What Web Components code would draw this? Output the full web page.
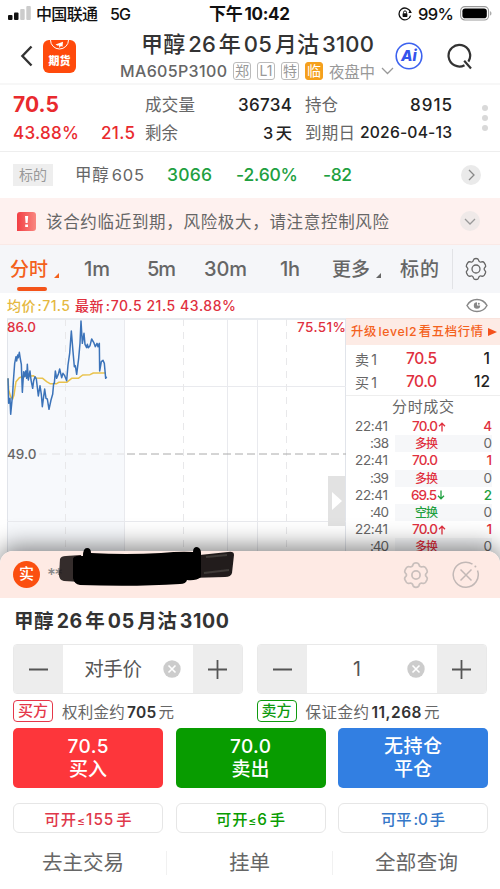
<!DOCTYPE html>
<html lang="zh-CN">
<head>
<meta charset="utf-8">
<meta name="viewport" content="width=device-width">
<title>甲醇26年05月沽3100</title>
<style>
    html, body {
        margin: 0;
        width: 500px;
        height: 889px;
        overflow: hidden;
        background: #fff;
    }
    body {
        font-family: Inter, "Noto Sans CJK SC", sans-serif;
        color: #333;
        text-autospace: normal;
    }
</style>
</head>
<body>
<option-page></option-page>

<script>
const gear = 'M12 1.5 C13.4 1.5 14.3 2 14.6 3.2 C14.9 4.7 16 5.4 17.5 4.9 C18.7 4.5 19.6 4.8 20.3 5.9 L21.4 7.8 C22 8.9 21.8 9.8 20.9 10.6 C19.9 11.5 19.9 12.5 20.9 13.4 C21.8 14.2 22 15.1 21.4 16.2 L20.3 18.1 C19.6 19.2 18.7 19.5 17.5 19.1 C16 18.6 14.9 19.3 14.6 20.8 C14.3 22 13.4 22.5 12 22.5 C10.6 22.5 9.7 22 9.4 20.8 C9.1 19.3 8 18.6 6.5 19.1 C5.3 19.5 4.4 19.2 3.7 18.1 L2.6 16.2 C2 15.1 2.2 14.2 3.1 13.4 C4.1 12.5 4.1 11.5 3.1 10.6 C2.2 9.8 2 8.9 2.6 7.8 L3.7 5.9 C4.4 4.8 5.3 4.5 6.5 4.9 C8 5.4 9.1 4.7 9.4 3.2 C9.7 2 10.6 1.5 12 1.5 Z'

function define(name, html) {
    customElements.define(name, class extends HTMLElement {
        constructor() {
            super();
            this.attachShadow({mode: 'open'})
            this.shadowRoot.innerHTML = html
        }
    })
}

define('status-bar', `
<style>
    :host { display: flex; align-items: center; height: 28px; color: #111; font-size: 16px; line-height: 28px; }
    .signal { margin: 0 5px 2px 8px; }
    .net { margin-left: 12px; font-size: 16px; font-weight: 500; }
    .carrier { font-weight: 500; }
    .time { margin-left: 78px; font-weight: 700; font-size: 17px; }
    .lock { margin-left: 108px; }
    .pct { margin-left: 6px; font-weight: 500; font-size: 16.5px; }
    .battery { margin: 0 0 2px 6px; }
</style>
<svg class="signal" width="23" height="14"><g fill="#111"><rect y="9" width="4.5" height="5" rx="1"/><rect x="6" y="6.5" width="4.5" height="7.5" rx="1"/></g><g fill="#ccc"><rect x="12.2" y="3" width="4.5" height="11" rx="1"/><rect x="18.3" width="4.5" height="14" rx="1"/></g></svg>
<fit-text class="carrier" w="62">中国联通</fit-text>
<fit-text class="net" w="21">5G</fit-text>
<fit-text class="time" w="81">下午10:42</fit-text>
<svg class="lock" width="14" height="14" viewBox="0 0 14 14" fill="none" stroke="#111" stroke-width="1.3"><path d="M12.5 5 A5.9 5.9 0 1 0 12.6 8.6"/><path d="M10.3 6 L13.8 6 L12.4 3.2Z" fill="#111" stroke="none"/><rect x="4.6" y="6.3" width="4.8" height="3.6" rx=".6" fill="#111" stroke="none"/><path d="M5.5 6.5V5.4a1.5 1.5 0 0 1 3 0v1.1" stroke-width="1"/></svg>
<fit-text class="pct" w="36">99%</fit-text>
<svg class="battery" width="34" height="15"><rect x=".6" y=".6" width="28" height="13.4" rx="4.3" fill="none" stroke="#999" stroke-width="1.1"/><rect x="2.4" y="2.4" width="24.4" height="9.8" rx="2.8" fill="#000"/><path d="M30.2 5.2c1.6.4 1.6 4 0 4.4z" fill="#999"/></svg>
`)

define('title-bar', `
<style>
    :host { display: flex; height: 57px; border-bottom: 2px solid #f7f7f7; box-sizing: border-box; }
    .back { margin: 17px 0 0 20px; }
    .app { margin: 12px 0 0 10px; }
    .mid { width: 276px; margin-left: 44px; }
    .name { display: block; width: 233px; margin-left: 21px; font-size: 22px; font-weight: 500; line-height: 32px; }
    .sub { display: flex; align-items: center; height: 22px; color: #666; font-size: 16px; font-weight: 500; }
    .tag { box-sizing: border-box; width: 18px; height: 18px; margin-left: 6px; border: 1px solid #bbb; border-radius: 3px; color: #999; font-size: 14px; font-weight: 400; line-height: 15px; text-align: center; }
    .hot { background: #f5a01d; border-color: #f5a01d; color: #fff; }
    .night { margin-left: 6px; color: #999; font-weight: 400; font-size: 15.5px; }
    .down { margin-left: 6px; }
    .ai { margin: 14px 0 0 -1px; }
    .search { margin: 15px 0 0 23px; }
</style>
<svg class="back" width="13" height="22" fill="none" stroke="#333" stroke-width="2.4"><path d="M11.5 1.5 L2.4 11 L11.5 20.5"/></svg>
<svg class="app" width="33" height="33" viewBox="0 0 33 33"><rect width="33" height="33" rx="6" fill="#ff4a0c"/><g fill="none" stroke="#fff" stroke-width="1"><path d="M7.5 0a9 9 0 0 0 18 0"/></g><path d="M12.5 4.4l7.5-2.7-.5 5-1.6-.8-1.6 2-.3-2.6-1.1.5z" fill="#fff"/><text x="16.5" y="25" text-anchor="middle" font-size="11" font-weight="900" fill="#fff">期货</text></svg>
<div class="mid">
    <fit-text class="name" w="233">甲醇26年05月沽3100</fit-text>
    <div class="sub">
        <fit-text class="code" w="107">MA605P3100</fit-text>
        <span class="tag">郑</span><span class="tag">L1</span><span class="tag">特</span><span class="tag hot">临</span>
        <fit-text class="night" w="46">夜盘中</fit-text>
        <svg class="down" width="13" height="8" fill="none" stroke="#999" stroke-width="1.3"><path d="M1 1l5.5 5.5L12 1"/></svg>
    </div>
</div>
<svg class="ai" width="28" height="28"><circle cx="14" cy="14" r="12.8" fill="none" stroke="#3c62ef" stroke-width="1.6"/><text x="13.8" y="19.3" text-anchor="middle" font-size="15" font-weight="800" font-style="italic" fill="#3453ec">Ai</text></svg>
<svg class="search" width="28" height="28" fill="none" stroke="#333" stroke-width="2.2"><path d="M18.5 22.2 A10.8 10.8 0 1 1 22.4 18.6"/><path d="M18.2 17.8 L25 25.4"/></svg>
`)

define('quote-head', `
<style>
    :host { display: flex; height: 67px; border-bottom: 1px solid #eee; box-sizing: border-box; color: #222; font-size: 17px; font-weight: 500; }
    .col { display: grid; grid-template-rows: 28px 28px; padding-top: 6px; line-height: 28px; }
    .price { color: #e92a2e; width: 122px; margin-left: 13px; }
    .big { font-size: 21px; font-weight: 700; }
    .pair { display: flex; justify-content: space-between; align-items: center; }
    .vol { width: 147px; margin-left: 10px; }
    .hold { width: 147px; margin-left: 13px; }
    .k { color: #666; font-weight: 400; font-size: 16.5px; }
    .days { font-size: 16.3px; }
    .date { font-size: 15.7px; }
    svg { margin: 20px 0 0 30px; }
</style>
<div class="col price">
    <fit-text class="big" w="46">70.5</fit-text>
    <div class="pair"><fit-text w="66">43.88%</fit-text><fit-text w="34">21.5</fit-text></div>
</div>
<div class="col vol">
    <div class="pair"><fit-text class="k" w="50">成交量</fit-text><fit-text w="54">36734</fit-text></div>
    <div class="pair"><fit-text class="k" w="33">剩余</fit-text><fit-text class="days" w="29">3天</fit-text></div>
</div>
<div class="col hold">
    <div class="pair"><fit-text class="k" w="33">持仓</fit-text><fit-text w="42">8915</fit-text></div>
    <div class="pair"><fit-text class="k" w="50">到期日</fit-text><fit-text class="date" w="92">2026-04-13</fit-text></div>
</div>
<svg width="6" height="26" fill="#d9d9d9"><circle cx="3" cy="3" r="3"/><circle cx="3" cy="13" r="3"/><circle cx="3" cy="23" r="3"/></svg>
`)

define('underlying-row', `
<style>
    :host { display: flex; align-items: center; height: 46px; font-size: 17.5px; font-weight: 500; line-height: 24px; color: #1ea03f; }
    .tag { width: 40px; height: 22px; margin-left: 13px; background: #eee; color: #999; font-size: 14px; font-weight: 400; line-height: 22px; text-align: center; }
    .name { margin-left: 22px; color: #666; font-weight: 400; font-size: 16.5px; }
    .p { margin-left: 23px; }
    .r { margin-left: 24px; }
    .d { margin-left: 25px; }
    svg { margin-left: 109px; }
</style>
<span class="tag">标的</span>
<fit-text class="name" w="69">甲醇605</fit-text>
<fit-text class="p" w="45">3066</fit-text>
<fit-text class="r" w="62">-2.60%</fit-text>
<fit-text class="d" w="29">-82</fit-text>
<svg width="20" height="20"><circle cx="10" cy="10" r="10" fill="#eaeaea"/><path d="M8 5l5 5-5 5" fill="none" stroke="#888" stroke-width="1.3"/></svg>
`)

define('risk-notice', `
<style>
    :host { display: flex; align-items: center; height: 47px; background: #fef1ef; border-bottom: 1px solid #fae9e6; box-sizing: border-box; font-size: 16.5px; line-height: 24px; color: #666; }
    .mark { margin-left: 17px; }
    .msg { margin: 2px 0 0 10px; }
    .fold { margin-left: auto; margin-right: 20px; }
</style>
<svg class="mark" width="19" height="19"><defs><linearGradient id="g" x1="0" x2="1"><stop stop-color="#f23f44"/><stop offset="1" stop-color="#f98780"/></linearGradient></defs><path d="M3 0h13a3 3 0 0 1 3 3v13a3 3 0 0 1-3 3H0V3a3 3 0 0 1 3-3z" fill="url(#g)"/><path d="M8 4h3.2l-.6 7H8.6zM8.2 12.6h2.8v2.4H8.2z" fill="#fff"/></svg>
<fit-text class="msg" w="343">该合约临近到期，风险极大，请注意控制风险</fit-text>
<svg class="fold" width="20" height="20"><circle cx="10" cy="10" r="10" fill="#efe9e8"/><path d="M5 8l5 5 5-5" fill="none" stroke="#999" stroke-width="1.3"/></svg>
`)

define('period-tabs', `
<style>
    :host { display: flex; height: 48px; background: #f5f6f9; font-size: 20px; font-weight: 500; line-height: 49px; color: #666; }
    .cn { font-size: 19px; }
    .on { position: relative; margin-left: 10px; color: #f4611c; }
    .on::after { content: ''; position: absolute; left: 7px; top: 42px; width: 30px; height: 4px; border-radius: 2px; background: #f4541a; }
    .tri { margin: 28px 0 0 6px; }
    .m1 { margin-left: 25px; } .m5 { margin-left: 37px; } .m30 { margin-left: 28px; }
    .h1 { margin-left: 33px; } .more { margin-left: 32px; } .base { margin-left: 19px; }
    .set { display: flex; align-items: center; height: 40px; margin: 4px 0 0 13px; padding-left: 11px; border-left: 1px solid #e2e3e6; }
</style>
<fit-text class="cn on" w="38">分时</fit-text>
<svg class="tri" width="5" height="5"><path d="M5 0v5H0z" fill="#f4611c"/></svg>
<fit-text class="m1" w="26">1m</fit-text>
<fit-text class="m5" w="29">5m</fit-text>
<fit-text class="m30" w="43">30m</fit-text>
<fit-text class="h1" w="20">1h</fit-text>
<fit-text class="cn more" w="38">更多</fit-text>
<svg class="tri" width="5" height="5"><path d="M5 0v5H0z" fill="#666"/></svg>
<fit-text class="cn base" w="39">标的</fit-text>
<div class="set"><svg width="24" height="24" viewBox="0 0 24 24" fill="none" stroke="#666" stroke-width="1.3"><path d="${gear}"/><circle cx="12" cy="12" r="4"/></svg></div>
`)

define('avg-line', `
<style>
    :host { display: flex; align-items: center; height: 25px; font-size: 14px; font-weight: 500; line-height: 20px; color: #e0303e; }
    .avg { margin: 0 5px 0 7px; color: #e5b83f; }
    svg { margin-left: auto; margin-right: 12px; }
</style>
<fit-text class="avg" w="63">均价:71.5</fit-text>
<fit-text w="161">最新:70.5 21.5 43.88%</fit-text>
<svg width="22" height="15" viewBox="0 0 22 15" fill="none" stroke="#888" stroke-width="1.5"><path d="M1 7.5C5.5 -.5 16.5 -.5 21 7.5C16.5 15.5 5.5 15.5 1 7.5Z"/><path d="M11 4.3V7.5H14.2A3.2 3.2 0 1 1 11 4.3Z" fill="#888" stroke="none"/><circle cx="12.8" cy="5.7" r="1" fill="#888" stroke="none"/></svg>
`)

define('time-chart', `
<style>
    :host { display: block; width: 346px; height: 248px; }
    svg { display: block; }
    text { font-weight: 500; font-size: 13.5px; }
</style>
<svg width="346" height="248">
    <rect x="7" y="1" width="118" height="247" fill="#f7f9fc"/>
    <g stroke="#e1e4ea" fill="none">
        <path d="M7 1H346" stroke-width="1.5"/><path d="M7.5 1V248M345.5 1V248"/>
        <path d="M124.5 1V248M227.5 1V248M257.5 1V248M7 68.5H346M7 203.5H346" stroke="#e9eaee"/>
        <path d="M65.5 1V248M183.5 1V248M286.5 1V248" stroke="#e8e8ea" stroke-dasharray="7 6"/>
        <path d="M39 136H124" stroke="#e0e0e2" stroke-dasharray="8 5"/>
        <path d="M127 136H346" stroke="#aaa" stroke-dasharray="8 4"/>
    </g>
    <g transform="translate(0 -3) scale(.33333)" fill="none" stroke-linejoin="round">
        <polyline stroke="#e9c24c" stroke-width="4.5" points="24,190 26,225 32,245 38,252 42,240 48,200 58,188 70,184 85,184 100,182 108,189 128,190 140,200 150,206 170,206 176,202 200,202 215,190 235,190 248,180 270,179 280,174 318,174"/>
        <polyline stroke="#3b73b9" stroke-width="4.5" points="24,190 26,265 30,250 32,298 38,235 40,200 44,145 48,125 50,138 53,120 55,128 58,112 61,132 64,148 67,232 71,170 74,185 77,168 80,190 82,148 85,195 90,168 93,195 98,220 101,197 105,185 109,192 115,243 120,212 124,238 127,275 134,222 138,250 142,252 147,283 153,255 158,238 161,205 163,205 166,168 170,190 175,178 179,162 185,188 189,175 194,182 200,197 204,150 209,115 214,48 219,110 223,155 226,152 230,178 236,130 240,85 243,18 247,85 252,55 255,88 260,98 262,88 265,98 270,92 275,72 281,82 286,95 291,85 294,95 298,85 299,168 304,140 309,136 313,145 317,190 320,185"/>
    </g>
    <text x="7" y="14" textLength="29" fill="#e0303e">86.0</text>
    <text x="297" y="14" textLength="49" fill="#e0303e">75.51%</text>
    <text x="7" y="140.5" textLength="29.5" fill="#666">49.0</text>
    <rect x="328" y="158" width="17" height="50" fill="#e2e2e2"/><path d="M332 174l10 9-10 9z" fill="#fff"/>
</svg>
`)

// one deal: time, price with arrow, volume, and the kind of deal under it
class TickRow extends HTMLElement {
    constructor() {
        super();
        this.attachShadow({mode: 'open'})
    }
    connectedCallback() {
        const [time, sec, price, arrow, vol, kind] = this.getAttribute('data').split(' ')
        const color = arrow !== 'down' ? '#e0303e' : '#1ea03f'
        const path = arrow !== 'down' ? 'M4 9.5V1.2M1 4.2L4 1.2L7 4.2' : 'M4 .5V8.8M1 5.8L4 8.8L7 5.8'
        this.shadowRoot.innerHTML = `
        <style>
            :host { display: grid; grid-template-columns: 34px 14px 64px 1fr; grid-template-rows: 17.3px 17px; margin: 0 0 0 9px; width: 137px; font-size: 13.5px; line-height: 17px; color: #666; }
            .time { grid-column: 1 / 3; }
            .sec { grid-column: 1 / 2; justify-self: end; }
            .price { display: flex; align-items: center; margin-left: ${arrow === 'down' ? 8 : 9}px; color: #e0303e; font-weight: 500; }
            .vol { color: ${color}; font-weight: 500; text-align: right; }
            .cell { grid-column: 3 / 5; display: flex; justify-content: space-between; background: #f6f7f9; margin-left: -8px; }
            .kind { margin-left: 20px; color: ${color}; font-weight: 500; font-size: 12px; }
        </style>
        <fit-text class="time" w="33">${time}</fit-text>
        <span class="price"><fit-text w="26">${price}</fit-text>${arrow === 'none' ? '' : `<svg width="8" height="10" viewBox="0 0 8 10" fill="none" stroke="${color}" stroke-width="1.3"><path d="${path}"/></svg>`}</span>
        <span class="vol">${vol}</span>
        <fit-text class="sec" w="19">${sec}</fit-text>
        <span class="cell"><fit-text class="kind" w="23">${kind}</fit-text><span>0</span></span>`
    }
}
customElements.define('tick-row', TickRow)

define('order-book', `
<style>
    :host { display: block; width: 154px; height: 248px; overflow: hidden; }
    .ad { display: flex; align-items: center; height: 27px; padding-left: 5px; background: #fdebe5; border-top: 1px solid #f9e3dd; box-sizing: border-box; color: #f4611c; font-size: 12.3px; font-weight: 500; line-height: 20px; }
    .ad svg { margin-left: 4px; }
    .lv { display: flex; align-items: center; height: 23px; padding: 0 10px 0 9px; font-size: 15.5px; font-weight: 500; color: #222; }
    .ad + .lv { padding-top: 2px; }
    .s { color: #666; font-weight: 400; font-size: 14px; }
    .c { margin: 0 auto 0 29px; color: #e0303e; }
    .head { height: 22px; margin-top: 2px; border-top: 1px solid #eee; box-sizing: border-box; line-height: 21px; font-size: 15px; text-align: center; color: #666; }
    .list { padding-top: 1px; }
</style>
<div class="ad"><fit-text w="132">升级level2看五档行情</fit-text><svg width="10" height="10"><path d="M1 1l9 4-9 4z" fill="#f4511c"/></svg></div>
<div class="lv"><fit-text class="s" w="22">卖1</fit-text><fit-text class="c" w="31">70.5</fit-text><span>1</span></div>
<div class="lv"><fit-text class="s" w="22">买1</fit-text><fit-text class="c" w="31">70.0</fit-text><fit-text w="16">12</fit-text></div>
<div class="head"><fit-text w="62">分时成交</fit-text></div>
<div class="list">
    <tick-row data="22:41 :38 70.0 up 4 多换"></tick-row>
    <tick-row data="22:41 :39 70.0 none 1 多换"></tick-row>
    <tick-row data="22:41 :40 69.5 down 2 空换"></tick-row>
    <tick-row data="22:41 :40 70.0 up 1 多换"></tick-row>
</div>
`)

define('sheet-head', `
<style>
    :host { position: relative; display: flex; align-items: center; height: 47px; border-radius: 13px 13px 0 0; background: #feeae4; color: #888; }
    .real { width: 27px; height: 27px; margin-left: 13px; border-radius: 50%; background: #fb4f10; color: #fff; font-size: 15px; font-weight: 500; line-height: 26px; text-align: center; }
    .acct { margin-left: 7px; font-size: 17px; font-weight: 500; }
    .blot { position: absolute; left: 56px; top: -4px; }
    .gear { margin-left: auto; }
    .close { margin: 0 20px 0 22px; }
</style>
<span class="real">实</span>
<fit-text class="acct" w="16">**</fit-text>
<svg class="gear" width="28" height="28" viewBox="0 0 24 24" fill="none" stroke="#c9bfbc" stroke-width="1.5"><path d="${gear}"/><circle cx="12" cy="12" r="3.5"/></svg>
<svg class="close" width="28" height="28" fill="none" stroke="#c2b8b6" stroke-width="1.5"><path d="M20.5 3.2A12.5 12.5 0 1 0 25.5 9.5"/><circle cx="23.4" cy="5.5" r="1" fill="#c2b8b6" stroke="none"/><path d="M8.5 8.5l11 11M19.5 8.5l-11 11"/></svg>
<svg class="blot" width="184" height="44">
    <defs><filter id="b"><feGaussianBlur stdDeviation=".7"/></filter></defs>
    <g filter="url(#b)">
        <path d="M4 12Q5 9 10 9L25 8V35L8 34Q3 33 3 28z" fill="#1c1614" opacity=".9"/>
        <path d="M134 9L172 5Q178 4 178 8L176 26Q175 30 169 30L134 31z" fill="#231f1e"/>
        <path d="M150 10L171 8M148 26L173 23" stroke="#3f3a38" stroke-width="2"/>
        <path d="M17 12Q18 8 27 9Q27 1 31 1Q35 1 35 6Q70 8 105 6Q125 4 137 5Q137 0 141 0Q145 1 145 6L145 30Q140 34 131 33Q130 37 124 37Q78 40 24 38Q18 37 17 31z" fill="#000"/>
    </g>
</svg>
`)

define('num-stepper', `
<style>
    :host { display: flex; width: 230px; height: 50px; box-sizing: border-box; border: 1px solid #e9e9e9; border-radius: 4px; overflow: hidden; }
    .btn { display: grid; place-items: center; width: 49px; background: #ededed; }
    .val { display: grid; grid-template-columns: 1fr 30px; align-items: center; flex: 1; font-size: 19.5px; line-height: 30px; text-align: center; color: #555; }
    .val span { justify-self: center; white-space: nowrap; }
</style>
<div class="btn"><svg width="19" height="19" stroke="#555" stroke-width="1.8"><path d="M0 9.5h19"/></svg></div>
<div class="val"><span><slot></slot></span><svg width="18" height="18"><circle cx="9" cy="9" r="8.7" fill="#ccc"/><path d="M5.5 5.5l7 7M12.5 5.5l-7 7" stroke="#fff" stroke-width="1.6"/></svg></div>
<div class="btn"><svg width="19" height="19" stroke="#555" stroke-width="1.8"><path d="M0 9.5h19M9.5 0v19"/></svg></div>
`)

define('trade-button', `
<style>
    :host { display: flex; flex-direction: column; }
    .main { display: flex; flex-direction: column; justify-content: center; align-items: center; height: 60px; border-radius: 5px; background: var(--tone); color: #fff; font-size: 19px; font-weight: 500; line-height: 23.5px; }
    .can { display: flex; align-items: center; justify-content: center; height: 30px; margin-top: 15px; box-sizing: border-box; border: 1px solid #e6e6e6; border-radius: 6px; color: var(--ink, var(--tone)); font-size: 15.3px; font-weight: 500; }
</style>
<div class="main"><slot name="top"></slot><slot name="act"></slot></div>
<div class="can"><slot name="can"></slot></div>
`)

define('order-sheet', `
<style>
    :host { position: relative; display: block; margin-top: -15px; height: 338px; background: #fff; border-radius: 13px 13px 0 0; box-shadow: 0 -4px 24px rgba(0, 0, 0, .5); }
    .name { display: block; margin: 0 0 0 14px; font-size: 19.5px; font-weight: 700; line-height: 46px; color: #333; }
    .steps { display: flex; gap: 14px; padding-left: 13px; }
    .notes { display: flex; height: 34px; padding-left: 13px; align-items: center; font-size: 15.5px; color: #666; }
    .note { display: flex; align-items: center; width: 244px; }
    .side { box-sizing: border-box; width: 40px; height: 22px; margin-right: 9px; border: 1px solid; border-radius: 4px; font-size: 15px; font-weight: 500; line-height: 20px; text-align: center; }
    .buy { color: #e5384a; } .sell { color: #0f9a0f; }
    b { font-weight: 600; color: #333; }
    .acts { display: grid; grid-template-columns: 150px 150px 150px; gap: 12.5px; padding-left: 13px; }
    .small { font-size: 12px; }
    .red { --tone: #fd363b; --ink: #e0384a; } .green { --tone: #089c00; } .blue { --tone: #327fe2; --ink: #3577c8; }
    .links { display: grid; grid-template-columns: 167px 166px 167px; height: 56px; margin-top: 2px; align-items: center; justify-items: center; font-size: 20.5px; line-height: 24px; color: #666; }
    .links div { display: flex; justify-content: center; width: 100%; height: 24px; box-sizing: border-box; border-right: 1px solid #f1f1f1; }
    .links div:last-child { border: 0; }
</style>
<sheet-head></sheet-head>
<fit-text class="name" w="215">甲醇26年05月沽3100</fit-text>
<div class="steps">
    <num-stepper><fit-text w="58">对手价</fit-text></num-stepper>
    <num-stepper>1</num-stepper>
</div>
<div class="notes">
    <div class="note"><span class="side buy">买方</span><fit-text w="112">权利金约<b>705</b>元</fit-text></div>
    <div class="note"><span class="side sell">卖方</span><fit-text w="134">保证金约<b>11,268</b>元</fit-text></div>
</div>
<div class="acts">
    <trade-button class="red"><fit-text slot="top" w="41">70.5</fit-text><fit-text slot="act" w="38">买入</fit-text><fit-text slot="can" w="87">可开<span class="small">≤</span>155手</fit-text></trade-button>
    <trade-button class="green"><fit-text slot="top" w="41">70.0</fit-text><fit-text slot="act" w="38">卖出</fit-text><fit-text slot="can" w="69">可开<span class="small">≤</span>6手</fit-text></trade-button>
    <trade-button class="blue"><fit-text slot="top" w="58">无持仓</fit-text><fit-text slot="act" w="38">平仓</fit-text><fit-text slot="can" w="64">可平:0手</fit-text></trade-button>
</div>
<div class="links">
    <div><fit-text w="82">去主交易</fit-text></div>
    <div><fit-text w="41">挂单</fit-text></div>
    <div><fit-text w="83">全部查询</fit-text></div>
</div>
`)

define('option-page', `
<style>
    :host { display: block; width: 500px; }
    .chart { display: flex; }
</style>
<status-bar></status-bar>
<title-bar></title-bar>
<quote-head></quote-head>
<underlying-row></underlying-row>
<risk-notice></risk-notice>
<period-tabs></period-tabs>
<avg-line></avg-line>
<div class="chart">
    <time-chart></time-chart>
    <order-book></order-book>
</div>
<order-sheet></order-sheet>
`)

// spreads its text over the width given in "w", defined last so its parents are styled
class FitText extends HTMLElement {
    constructor() {
        super();
        this.attachShadow({mode: 'open'})
        this.shadowRoot.innerHTML = `
        <style>
            :host { display: inline-block; white-space: nowrap; flex: none; }
        </style>
        <slot></slot>`
    }
    connectedCallback() {
        const w = parseFloat(this.getAttribute('w'))
        const range = document.createRange()
        range.selectNodeContents(this)
        const gap = (w - range.getBoundingClientRect().width) / (this.textContent.length - 1)
        this.style.letterSpacing = gap.toFixed(3) + 'px'
        this.style.width = w + 'px'
    }
}
customElements.define('fit-text', FitText)
</script>
</body>
</html>
